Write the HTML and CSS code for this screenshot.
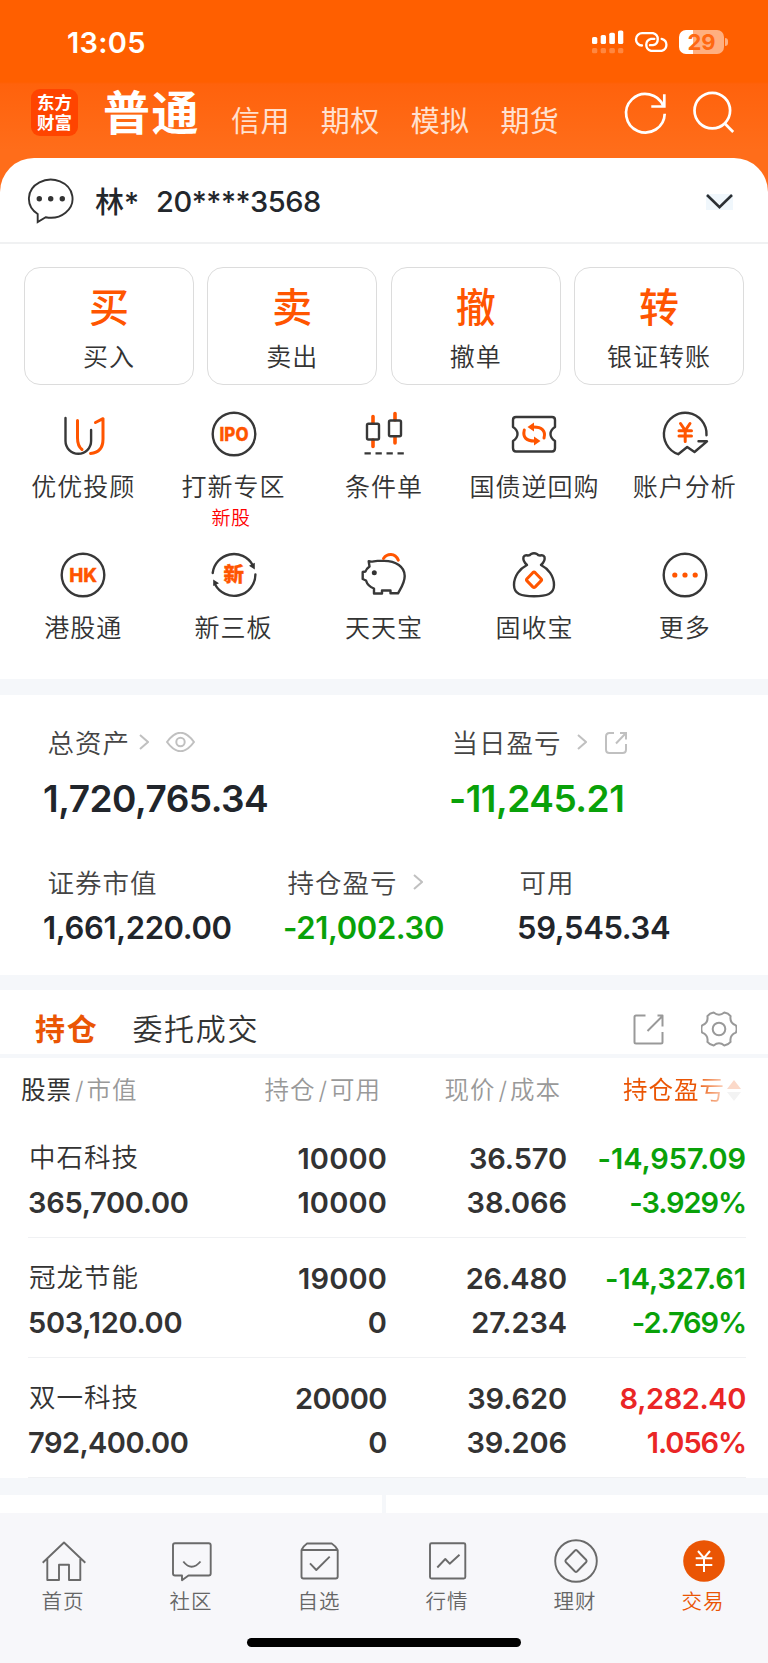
FILE: index.html
```
<!DOCTYPE html>
<html lang="zh-CN">
<head>
<meta charset="utf-8">
<title>交易</title>
<link rel="stylesheet" href="styles.css">
</head>
<body>
<div class="app">
  <header class="top">
    <div class="status">
      <span class="clock">13:05</span>
      <div class="status-icons">
        <svg class="signal" width="32" height="24" viewBox="0 0 32 24" fill="#fff">
          <rect x="0" y="7" width="5.3" height="7" rx="1.6"/><rect x="8.7" y="5" width="5.3" height="9" rx="1.6"/><rect x="17.3" y="2.7" width="5.6" height="11.3" rx="1.6"/><rect x="26" y="0.4" width="5.3" height="13.6" rx="1.6"/>
          <g opacity=".25"><rect x="0" y="18" width="5.3" height="5.2" rx="1.5"/><rect x="8.7" y="18" width="5.3" height="5.2" rx="1.5"/><rect x="17.3" y="18" width="5.6" height="5.2" rx="1.5"/><rect x="26" y="18" width="5.3" height="5.2" rx="1.5"/></g>
        </svg>
        <svg class="link" width="36" height="22" viewBox="751 93.500 108 66" fill="none" stroke="#fff" stroke-width="7" stroke-linecap="round">
          <path d="M775 137A18.500 18.500 0 0 1 776 100H808A18.500 18.500 0 0 1 808 136H799"/>
          <path d="M834 117A18.500 18.500 0 0 1 834 153H802A18.500 18.500 0 0 1 802 117H812"/>
        </svg>
        <span class="battery"><b>29</b></span><i class="nub"></i>
      </div>
    </div>
    <div class="bar">
      <div class="logo"><span>东方</span><span>财富</span></div>
      <nav class="modes">
        <a class="mode on">普通</a><a class="mode">信用</a><a class="mode">期权</a><a class="mode">模拟</a><a class="mode">期货</a>
      </nav>
      <svg class="refresh" width="48" height="48" viewBox="0 0 48 48" fill="none" stroke="#fff" stroke-width="2.700"><path d="M43.700 24.700A19.300 19.300 0 1 1 42.300 17"/><path d="M43.300 5.300V17.500H30.300"/></svg>
      <svg class="search" width="48" height="48" viewBox="0 0 48 48" fill="none" stroke="#fff" stroke-width="2.700"><circle cx="24.300" cy="21.600" r="17.800"/><path d="M36.800 34.500L45.200 43"/></svg>
    </div>
    <div class="account">
      <svg width="48" height="48" viewBox="0 0 48 48"><path d="M10.700 36.950A21.800 19 0 1 1 18.700 40.200L10.700 45Z" fill="none" stroke="#333" stroke-width="1.900"/><g fill="#333"><circle cx="12.300" cy="21.700" r="2.700"/><circle cx="23.700" cy="21.700" r="2.700"/><circle cx="35.300" cy="21.700" r="2.700"/></g></svg>
      <span class="who">林*</span><span class="acct">20****3568</span>
      <svg class="down" width="27" height="16" viewBox="0 0 27 16" fill="none" stroke="#2b2f33" stroke-width="2.600"><path d="M1 1L13.500 13.300L26 1"/></svg>
    </div>
  </header>

  <section class="trade">
    <div class="cards">
      <a class="card"><b>买</b><span>买入</span></a>
      <a class="card"><b>卖</b><span>卖出</span></a>
      <a class="card"><b>撤</b><span>撤单</span></a>
      <a class="card"><b>转</b><span>银证转账</span></a>
    </div>
    <div class="tools">
      <a class="tool"><svg viewBox="0 0 48 48"><path class="d" d="M6.500 8V31A12.800 12.800 0 0 0 32.100 31V20"/><path class="o" d="M18.500 10.500V28Q18.500 36 23 39.500M36.500 12.500L44 8.700V29Q44 42.500 31.500 43.500"/></svg><span>优优投顾</span></a>
      <a class="tool"><svg viewBox="0 0 48 48"><circle class="d" cx="24" cy="24" r="21.300"/><text class="t" x="9.500" y="30.700" font-size="18.500" textLength="29" lengthAdjust="spacingAndGlyphs">IPO</text></svg><span>打新专区</span><em>新股</em></a>
      <a class="tool"><svg viewBox="0 0 48 48"><path class="o flat" d="M13 6.500V13M13 30V36.500M35 3.500V10M35 27V33"/><rect class="d" x="7" y="13.700" width="12" height="15.800" rx="1.500"/><rect class="d" x="29" y="10.500" width="12" height="15.800" rx="1.500"/><path class="d dash" d="M4.500 43.400H45" stroke-dasharray="6.300 4.700"/></svg><span>条件单</span></a>
      <a class="tool"><svg viewBox="0 0 48 48"><path class="d" d="M6 7H42Q45 7 45 10V17Q40.500 20 40.500 24T45 31V38Q45 41.500 42 41.500H6Q3 41.500 3 38V31Q7.500 28 7.500 24T3 17V10Q3 7 6 7Z"/><path class="o" d="M14.300 20C12.500 27 16 31 24.500 31M34 28C36 21 32 17 23.500 17"/><path class="f" d="M24 26.500L30.500 31L24 35.500ZM24 12.500L17.500 17L24 21.500Z"/></svg><span>国债逆回购</span></a>
      <a class="tool"><svg viewBox="0 0 48 48"><path class="d" d="M45.500 25.200A21.300 21.300 0 1 0 17.200 44.200L26.200 37L33.500 42L46 31.300H37.500"/><path class="o" d="M19.500 13.500L24.200 20.500L29 13.500M24.200 21V31.500M18 20.800H30.500M18 26H30.500"/></svg><span>账户分析</span></a>
      <a class="tool"><svg viewBox="0 0 48 48"><circle class="d" cx="24" cy="24" r="21.300"/><text class="t" x="10.200" y="30.800" font-size="18.800" textLength="28" lengthAdjust="spacingAndGlyphs">HK</text></svg><span>港股通</span></a>
      <a class="tool"><svg viewBox="0 0 48 48"><path class="d" d="M2.700 22A21.400 21.400 0 0 1 42.500 13.800M45.400 23.500A21.400 21.400 0 0 1 5 33.300"/><path class="k" d="M39 14.800L44.800 11.800V18.500ZM3.200 28.500L9 32.200L3.200 35Z"/><text class="t" x="13.500" y="31" font-size="20.500">新</text></svg><span>新三板</span></a>
      <a class="tool"><svg viewBox="0 0 48 48"><path class="d" d="M8.700 10.200C12 11.500 14 9.700 18 9.900H24C36 9.900 44.700 16 44.700 25C44.700 32 41 37 38 42.300H30.500V39.500H22V42.500H14V37.500C10 36 7 33 6 29.500L2.700 28V21L5.500 20.500C6 18.500 7.500 17 9.500 15.500Z"/><circle cx="14.300" cy="21.700" r="2.500" fill="#333"/><path class="o" d="M23.500 7.500C27 2.500 35 1.500 38.300 9.200"/></svg><span>天天宝</span></a>
      <a class="tool"><svg viewBox="0 0 48 48"><path class="d" d="M17 14Q12.500 10 13.500 6Q14.500 3.500 18 4.500Q20 4.500 21 3Q24 1.500 27 3Q28 4.500 30 4.500Q33.500 3.500 34.500 6Q35.500 10 31 14C38 17.500 44 25 44 34C44 43 37 45.300 24 45.300S4 43 4 34C4 25 10 17.500 17 14Z"/><path class="o" d="M22.800 21.700L17 27.700Q15.900 28.800 17 29.900L22.800 35.900Q24 37 25.200 35.900L31 29.900Q32.100 28.800 31 27.700L25.200 21.700Q24 20.600 22.800 21.700Z"/></svg><span>固收宝</span></a>
      <a class="tool"><svg viewBox="0 0 48 48"><circle class="d" cx="24" cy="24" r="21.300"/><g class="f"><circle cx="13.800" cy="24" r="2.600"/><circle cx="24" cy="24" r="2.600"/><circle cx="34.200" cy="24" r="2.600"/></g></svg><span>更多</span></a>
    </div>
  </section>

  <section class="assets">
    <div class="totals">
      <div><p class="lbl">总资产<svg class="chev" viewBox="0 0 10 16"><path d="M1 1L9 8L1 15"/></svg><svg class="eye" viewBox="0 0 29 20"><path d="M1 10Q14.500 -8.500 28 10Q14.500 28.500 1 10Z"/><circle cx="14.500" cy="10" r="4.200"/></svg></p><p class="big">1,720,765.34</p></div>
      <div><p class="lbl day">当日盈亏<svg class="chev wide" viewBox="0 0 10 16"><path d="M1 1L9 8L1 15"/></svg><svg class="share" viewBox="0 0 22 22"><path d="M9 1H4.500Q1 1 1 4.500V17.500Q1 21 4.500 21H17.500Q21 21 21 17.500V12M11 11.500L20.500 1.500M15 1H21V7.500"/></svg></p><p class="big loss">-11,245.21</p></div>
    </div>
    <div class="details">
      <div><p class="lbl">证券市值</p><p class="mid">1,661,220.00</p></div>
      <div><p class="lbl">持仓盈亏<svg class="chev wide" viewBox="0 0 10 16"><path d="M1 1L9 8L1 15"/></svg></p><p class="mid loss">-21,002.30</p></div>
      <div><p class="lbl day">可用</p><p class="mid">59,545.34</p></div>
    </div>
  </section>

  <section class="holdings">
    <div class="tabs">
      <a class="tab on">持仓</a><a class="tab">委托成交</a>
      <svg class="export" width="31" height="31" viewBox="0 0 31 31"><path d="M12.500 1.500H3Q1.500 1.500 1.500 3V28Q1.500 29.500 3 29.500H28Q29.500 29.500 29.500 28V18M14.500 17L29 2.500M24.500 1.500H29.500V12.500"/></svg>
      <svg class="gear" width="36" height="36" viewBox="-18 -18 36 36"><path d="M16.900 -3.600Q18.400 0 16.900 3.600Q10.400 6 11.600 12.900Q9.200 15.900 5.350 16.450Q0 12 -5.350 16.450Q-9.200 15.900 -11.600 12.900Q-10.400 6 -16.900 3.600Q-18.400 0 -16.900 -3.600Q-10.400 -6 -11.600 -12.900Q-9.200 -15.900 -5.350 -16.450Q0 -12 5.350 -16.450Q9.200 -15.900 11.600 -12.900Q10.400 -6 16.900 -3.600Z"/><circle r="6.300"/></svg>
    </div>
    <div class="thead">
      <span><b>股票</b><i>/</i>市值</span><span>持仓<i>/</i>可用</span><span>现价<i>/</i>成本</span>
      <span class="sort"><u>持仓盈亏</u><svg width="14" height="21" viewBox="0 0 14 21"><path d="M0 9L7 0L14 9Z" fill="#fbd9c9"/><path d="M0 12H14L7 21Z" fill="#f3f3f3"/></svg></span>
    </div>
    <div class="row">
      <div><p class="name">中石科技</p><p>365,700.00</p></div><div class="n"><p>10000</p><p>10000</p></div><div class="price"><p>36.570</p><p>38.066</p></div><div class="loss"><p>-14,957.09</p><p class="pct">-3.929%</p></div>
    </div>
    <div class="row">
      <div><p class="name">冠龙节能</p><p>503,120.00</p></div><div class="n"><p>19000</p><p>0</p></div><div class="price"><p>26.480</p><p>27.234</p></div><div class="loss"><p>-14,327.61</p><p class="pct">-2.769%</p></div>
    </div>
    <div class="row">
      <div class="snug"><p class="name">双一科技</p><p>792,400.00</p></div><div class="n tight"><p>20000</p><p>0</p></div><div class="price"><p>39.620</p><p>39.206</p></div><div class="gain"><p>8,282.40</p><p class="pct">1.056%</p></div>
    </div>
  </section>

  <div class="next"><span></span><span></span></div>

  <footer class="foot">
    <nav class="nav">
      <a><svg viewBox="0 0 48 48"><path d="M2.700 25.700L24 5.500L45.300 25.700M7.300 22V43H19V27.700H29V43H40.300V22"/></svg><span>首页</span></a>
      <a><svg viewBox="0 0 48 48"><path d="M7 6.200H40.700Q42.700 6.200 42.700 8.200V36.500Q42.700 38.500 40.700 38.500H20.500L14 43.300V38.500H7Q5 38.500 5 36.500V8.200Q5 6.200 7 6.200ZM15.300 24.500Q23.500 35 32.500 24.500"/></svg><span>社区</span></a>
      <a><svg viewBox="0 0 48 48"><path d="M5.500 13H41.700V39.500Q41.700 41.500 39.700 41.500H7.500Q5.500 41.500 5.500 39.500ZM5.500 13Q8 8.500 11 6.500H35.700Q39 8.500 41.700 13M14 26.300L20.300 33L33.700 19.700"/></svg><span>自选</span></a>
      <a><svg viewBox="0 0 48 48"><rect x="6" y="6.300" width="35.300" height="35.200" rx="1.500"/><path d="M13.300 30.500L21.300 22L25.700 26.700L35.500 17.700"/></svg><span>行情</span></a>
      <a><svg viewBox="0 0 48 48"><circle cx="24" cy="24" r="20.800"/><path d="M23 13.500L13.700 23Q12.900 24 13.700 25L23 34.500Q24 35.300 25 34.500L34.300 25Q35.100 24 34.300 23L25 13.500Q24 12.700 23 13.500Z"/></svg><span>理财</span></a>
      <a class="on"><svg viewBox="0 0 48 48"><circle class="disc" cx="24" cy="24" r="20.800"/><path class="yen" d="M18 14L24 21L30 14M24 21V35M15.700 21.200H32.300M15.700 28H32.300"/></svg><span>交易</span></a>
    </nav>
    <div class="home"></div>
  </footer>
</div>
</body>
</html>
```
FILE: styles.css
```
* { box-sizing: border-box; }
body { margin: 0; background: #fff; font-family: Inter, "Noto Sans CJK SC", sans-serif; color: #333; }
p { margin: 0; }
svg { display: block; flex: none; }
.app { width: 768px; }

/* header */
.top { background: linear-gradient(#ff5f00 0, #ff5f00 82px, #ff620c 84px, #ff6d1a 150px, #ff6d1a 100%); }
.status { display: flex; justify-content: space-between; height: 83px; padding: 0 40px 0 67px; line-height: 85px; }
.clock { color: #fff; font-size: 29px; font-weight: 600; letter-spacing: .3px; }
.status-icons { display: flex; align-items: center; }
.link { margin: 0 9px 0 10px; }
.signal { margin-left: 1px; }
.battery { width: 45px; height: 24px; border-radius: 7px; background: linear-gradient(90deg, #fff 13.500px, #ffaf80 13.500px); text-align: center; line-height: 24px; }
.battery b { display: block; font-size: 22px; font-weight: 700; color: #ff6812; }
.nub { width: 3px; height: 8px; margin-left: 1px; border-radius: 0 3px 3px 0; background: #ffaf80; }
.bar { display: flex; height: 75px; padding: 0 32px 0 31px; }
.logo { width: 47px; height: 47px; margin-top: 6px; padding-top: 4px; border-radius: 9px; background: #ff4400; color: #fff; font-size: 17.500px; font-weight: 700; text-align: center; }
.logo span { display: block; line-height: 19.500px; }
.modes { display: flex; }
.mode { margin-left: 31px; color: #ffe0cf; font-size: 29px; font-weight: 400; letter-spacing: .4px; line-height: 77px; white-space: nowrap; }
.mode.on { margin-left: 25px; color: #fff; font-size: 47px; font-weight: 600; letter-spacing: 1.500px; line-height: 59px; }
.refresh { margin: 6px 0 0 auto; }
.search { margin: 6px 0 0 19px; }
.account { display: flex; align-items: center; height: 86px; padding: 2px 35px 0 27px; border-radius: 34px 34px 0 0; border-bottom: 2px solid #f0f1f2; background: #fff; color: #23272c; font-size: 29px; font-weight: 500; }
.account > svg:first-child { margin-top: -1px; }
.who { margin: -3px 0 0 20px; }
.acct { margin-left: 17px; letter-spacing: -.5px; }
.down { margin-left: auto; margin-top: 2px; background: #f0f7fc; }

/* quick trade */
.trade { height: 435px; padding-top: 23px; }
.cards { display: grid; grid-template-columns: repeat(4, 1fr); gap: 13.500px; padding: 0 24px; }
.card { display: block; height: 118px; padding-top: 10px; border: 1.500px solid #dcdcdc; border-radius: 16px; text-align: center; }
.card b { display: block; color: #ff5500; font-size: 40px; font-weight: 500; line-height: 60px; }
.card span { display: block; font-size: 25px; font-weight: 350; letter-spacing: 1px; line-height: 38px; }
.tools { display: grid; grid-template-columns: repeat(5, 1fr); grid-auto-rows: 141px; padding: 0 8px; }
.tool { display: flex; flex-direction: column; align-items: center; padding-top: 24.500px; }
.tool svg { width: 48px; height: 48px; margin-bottom: 11.500px; }
.tool span { font-size: 25px; font-weight: 350; letter-spacing: 1px; line-height: 36px; white-space: nowrap; }
.tool em { margin: 1.500px 5px 0 0; color: #f00; font-size: 19px; font-style: normal; font-weight: 350; letter-spacing: .5px; line-height: 24px; }
.d { fill: none; stroke: #383838; stroke-width: 2.400; stroke-linejoin: round; stroke-linecap: round; }
.dash { stroke-linecap: butt; }
.o { fill: none; stroke: #ff5500; stroke-width: 3; stroke-linejoin: round; stroke-linecap: round; }
.o.flat { stroke-width: 3.600; }
.f { fill: #ff5500; }
.k { fill: #333; }
.t { fill: #ff5500; font-weight: 800; stroke: #ff5500; stroke-width: .3; stroke-linejoin: round; }

/* assets */
.assets { height: 311px; padding: 23px 0 0 43px; border-top: 16px solid #f5f7fa; border-bottom: 15px solid #f5f7fa; color: #21252b; font-weight: 600; }
.totals { display: grid; grid-template-columns: 406px 1fr; }
.details { display: grid; grid-template-columns: 240px 234px 1fr; margin-top: 28px; }
.lbl { display: flex; align-items: center; height: 48px; margin-bottom: 1px; padding: 0 0 1px 4.500px; color: #444; font-size: 26.500px; font-weight: 350; letter-spacing: 1px; }
.lbl.day { padding-left: 2.500px; }
.lbl svg { fill: none; stroke: #c0c0c0; stroke-width: 2; }
.chev { width: 10px; height: 16px; margin-left: 9px; }
.chev.wide { margin-left: 15px; }
.eye { width: 29px; height: 20px; margin-left: 17px; }
.share { width: 22px; height: 22px; margin: 2px 0 0 18px; }
.big { font-size: 37px; letter-spacing: -.5px; line-height: 63px; }
.mid { font-size: 31px; letter-spacing: -.35px; line-height: 42px; }
.loss { color: #09a109; }
.gain { color: #ea2626; }

/* holdings */
.holdings { height: 488px; }
.tabs { display: flex; align-items: center; height: 68px; padding: 14px 31px 0 35px; border-bottom: 4px solid #f5f7fa; }
.tab { font-size: 30px; font-weight: 350; letter-spacing: 1.700px; line-height: 40px; }
.tab.on { margin-right: 34px; color: #ea5504; font-weight: 600; }
.tabs svg { fill: none; stroke: #999; stroke-width: 2; stroke-linejoin: round; }
.export { margin-left: auto; }
.gear { margin-left: 37px; }
.thead, .row { display: grid; grid-template-columns: 190px 169px 181px 178px; padding: 0 22px 0 28px; text-align: right; }
.thead { height: 60px; padding-top: 3px; color: #999; font-size: 24.500px; font-weight: 350; letter-spacing: 1px; line-height: 58px; white-space: nowrap; }
.thead span:first-child { margin-left: -7px; text-align: left; }
.thead span:nth-child(2) { margin-right: 6px; }
.thead span:nth-child(3) { margin-right: 7px; }
.thead b { color: #333; font-weight: 400; }
.thead i { padding: 0 2px 0 3px; font-style: normal; }
.sort { display: flex; justify-content: flex-end; align-items: center; padding-right: 5px; }
.sort u { margin-right: 2px; text-decoration: none; font-weight: 400; background: linear-gradient(90deg, #ea5504 72%, #fbd5c2); background-clip: text; -webkit-background-clip: text; color: transparent; }
.row { height: 120px; padding-top: 19px; font-size: 29px; font-weight: 600; letter-spacing: -.2px; line-height: 44px; background: linear-gradient(#f0f1f3, #f0f1f3) 28px 100% / 718px 1.500px no-repeat; }
.row > :first-child { text-align: left; letter-spacing: -.3px; }
.row > .snug { letter-spacing: -.55px; }
.row .name { margin-bottom: 4px; padding-left: 1px; font-size: 26.500px; font-weight: 350; letter-spacing: 1px; line-height: 40px; }
.row .n { letter-spacing: .15px; }
.row .tight { letter-spacing: -.5px; }
.row .price { padding-right: 1px; letter-spacing: -.1px; }
.row .loss { letter-spacing: -.05px; }
.row .gain { letter-spacing: -.4px; }
.row .pct { letter-spacing: -1.100px; }
.next { display: grid; grid-template-columns: 382px 1fr; gap: 4px; height: 35px; padding-top: 17px; background: #f5f7fa; }
.next span { background: #fff; }

/* bottom navigation */
.foot { height: 150px; padding-top: 24px; background: #f7f7fa; }
.nav { display: grid; grid-template-columns: repeat(6, 128px); height: 101px; }
.nav a { display: flex; flex-direction: column; align-items: center; color: #666; font-size: 20.500px; font-weight: 350; letter-spacing: 1px; }
.nav svg { width: 48px; height: 48px; fill: none; stroke: #6a6a6a; stroke-width: 1.900; stroke-linejoin: round; }
.nav span { margin: 2px 2px 0 0; line-height: 30px; }
.nav .on { color: #ea5504; }
.nav .disc { fill: #ea5504; stroke: none; }
.nav .yen { stroke: #fff; stroke-width: 2; }
.home { width: 274px; height: 9px; margin: 0 auto; border-radius: 5px; background: #000; }
```
